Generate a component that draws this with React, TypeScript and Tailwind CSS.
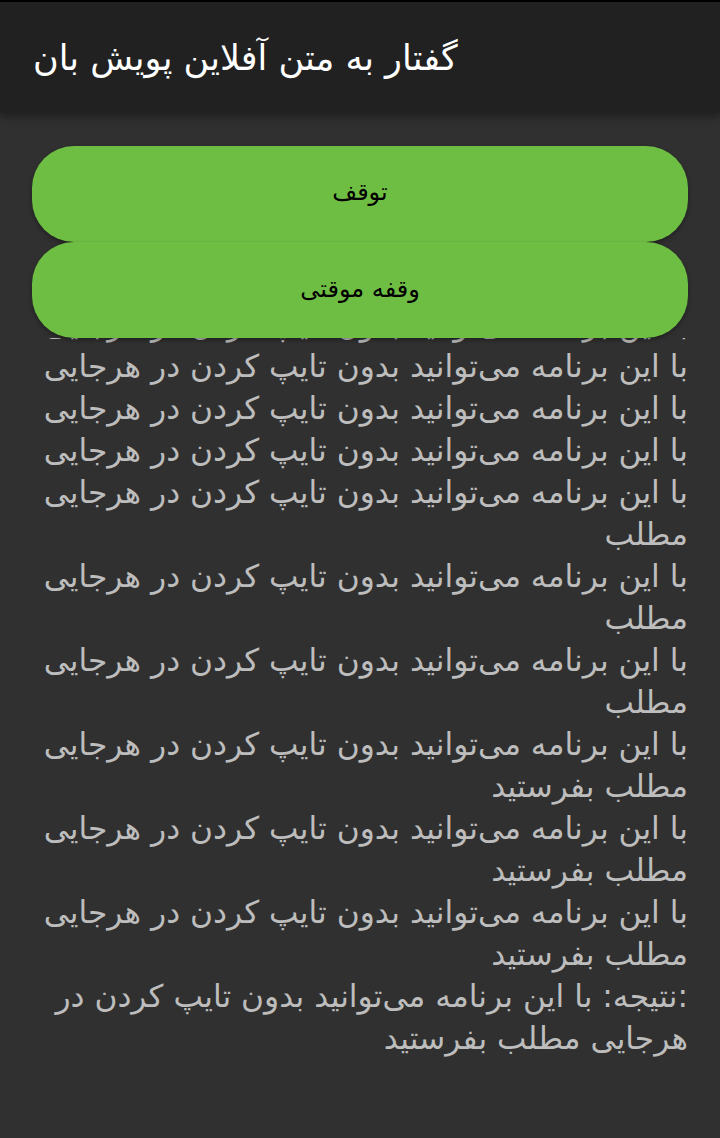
import React from 'react'

const SENTENCE = 'با این برنامه می‌توانید بدون تایپ کردن در هرجایی'

// partial recognition results, newest at the bottom
const results = [
  SENTENCE,
  SENTENCE,
  SENTENCE,
  SENTENCE,
  SENTENCE + ' مطلب',
  SENTENCE + ' مطلب',
  SENTENCE + ' مطلب',
  SENTENCE + ' مطلب بفرستید',
  SENTENCE + ' مطلب بفرستید',
  SENTENCE + ' مطلب بفرستید',
  ':نتیجه: ' + SENTENCE + ' مطلب بفرستید',
]

export default function App() {
  return (
    <div
      className="w-[720px] h-[1138px] bg-[#303030] flex flex-col overflow-hidden"
      style={{ fontFamily: '"DejaVu Sans", sans-serif' }}
    >
      {/* status strip */}
      <div className="h-[2px] bg-black shrink-0" />

      {/* App bar */}
      <div className="relative z-10 h-[111px] shrink-0 bg-[#212121] flex items-center px-[33px] shadow-[0_4px_8px_rgba(0,0,0,0.35)]">
        <h1 dir="rtl" className="text-white text-[35px] leading-none pt-[2px]">
          گفتار به متن آفلاین پویش بان
        </h1>
      </div>

      {/* Buttons */}
      <div className="relative z-10 flex flex-col px-[32px] pt-[33px] shrink-0">
        <button className="h-[96px] rounded-[42px] bg-[#6fbe44] text-black text-[24px] pb-[4px] shadow-[0_2px_4px_rgba(0,0,0,0.35)]">
          توقف
        </button>
        <button className="h-[96px] rounded-[42px] bg-[#6fbe44] text-black text-[24px] pb-[2px] shadow-[0_2px_4px_rgba(0,0,0,0.35)]">
          وقفه موقتی
        </button>
      </div>

      {/* Transcript, scrolled */}
      <div className="flex-1 overflow-hidden">
        <div dir="rtl" className="-mt-[35px] px-[32px] text-[31.3px] leading-[42px] text-[#bdbdbd] text-right">
          {results.map((line, i) => (
            <p key={i}>{line}</p>
          ))}
        </div>
      </div>
    </div>
  )
}
